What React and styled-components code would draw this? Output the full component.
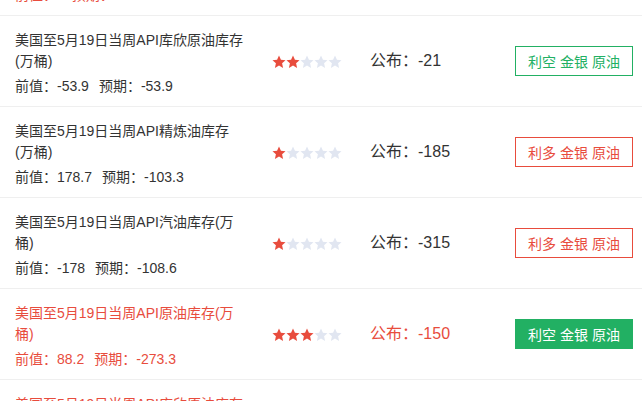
import styled, { createGlobalStyle } from "styled-components";

const GlobalStyle = createGlobalStyle`
  html, body {
    margin: 0;
    padding: 0;
    background: #fff;
    overflow: hidden;
  }
  body {
    font-family: "Liberation Sans", "Noto Sans CJK SC", sans-serif;
    color: #333;
  }
`;

const List = styled.ul`
  list-style: none;
  margin: -75px 0 0 0;
  padding: 0;
`;

const Row = styled.li`
  display: flex;
  align-items: center;
  height: 90px;
  padding: 0 9px 0 15px;
  border-bottom: 1px solid #efefef;
  color: ${(props) => (props.$hot ? "#e84c3d" : "#333")};
`;

const Info = styled.div`
  width: 230px;
  padding-top: 4px;
  font-size: 14px;
`;

const Title = styled.div`
  line-height: 21px;
`;

const Values = styled.div`
  margin-top: 4px;
  line-height: 21px;
  span + span {
    margin-left: 10px;
  }
`;

const Stars = styled.div`
  display: flex;
  width: 98px;
  margin-left: 27px;
  padding-top: 2px;
`;

const Publish = styled.div`
  flex: 1;
  font-size: 16px;
  line-height: 22px;
`;

const Tag = styled.div`
  box-sizing: border-box;
  width: 118px;
  height: 30px;
  display: flex;
  align-items: center;
  justify-content: center;
  font-size: 14px;
  border: 1px solid ${(props) => props.$color};
  color: ${(props) => (props.$filled ? "#fff" : props.$color)};
  background: ${(props) => (props.$filled ? props.$color : "#fff")};
`;

const Star = ({ on }) => (
  <svg width="14" height="14" viewBox="0 0 24 24">
    <path
      d="M12 1l3.3 7.2 7.9.8-5.9 5.3 1.7 7.8L12 18.1l-7 4 1.7-7.8L.8 9l7.9-.8z"
      fill={on ? "#e84c3d" : "#e1e6f1"}
    />
  </svg>
);

const GREEN = "#22b063";
const RED = "#e84c3d";

const rows = [
  {
    title: "美国至5月19日当周API精炼油库存(万桶)",
    prev: "-",
    exp: "-",
    stars: 3,
    pub: "-",
    tag: "利多 金银 原油",
    color: RED,
    hot: true,
  },
  {
    title: "美国至5月19日当周API库欣原油库存(万桶)",
    prev: "-53.9",
    exp: "-53.9",
    stars: 2,
    pub: "-21",
    tag: "利空 金银 原油",
    color: GREEN,
  },
  {
    title: "美国至5月19日当周API精炼油库存(万桶)",
    prev: "178.7",
    exp: "-103.3",
    stars: 1,
    pub: "-185",
    tag: "利多 金银 原油",
    color: RED,
  },
  {
    title: "美国至5月19日当周API汽油库存(万桶)",
    prev: "-178",
    exp: "-108.6",
    stars: 1,
    pub: "-315",
    tag: "利多 金银 原油",
    color: RED,
  },
  {
    title: "美国至5月19日当周API原油库存(万桶)",
    prev: "88.2",
    exp: "-273.3",
    stars: 3,
    pub: "-150",
    tag: "利空 金银 原油",
    color: GREEN,
    hot: true,
    filled: true,
  },
  {
    title: "美国至5月19日当周API库欣原油库存(万桶)",
    prev: "-",
    exp: "-",
    stars: 3,
    pub: "-",
    tag: "利多 金银 原油",
    color: RED,
    hot: true,
  },
];

export default function App() {
  return (
    <>
      <GlobalStyle />
      <List>
        {rows.map((r, i) => (
          <Row key={i} $hot={r.hot}>
            <Info>
              <Title>{r.title}</Title>
              <Values>
                <span>前值：{r.prev}</span>
                <span>预期：{r.exp}</span>
              </Values>
            </Info>
            <Stars>
              {[0, 1, 2, 3, 4].map((n) => (
                <Star key={n} on={n < r.stars} />
              ))}
            </Stars>
            <Publish>公布：{r.pub}</Publish>
            <Tag $color={r.color} $filled={r.filled}>
              {r.tag}
            </Tag>
          </Row>
        ))}
      </List>
    </>
  );
}
